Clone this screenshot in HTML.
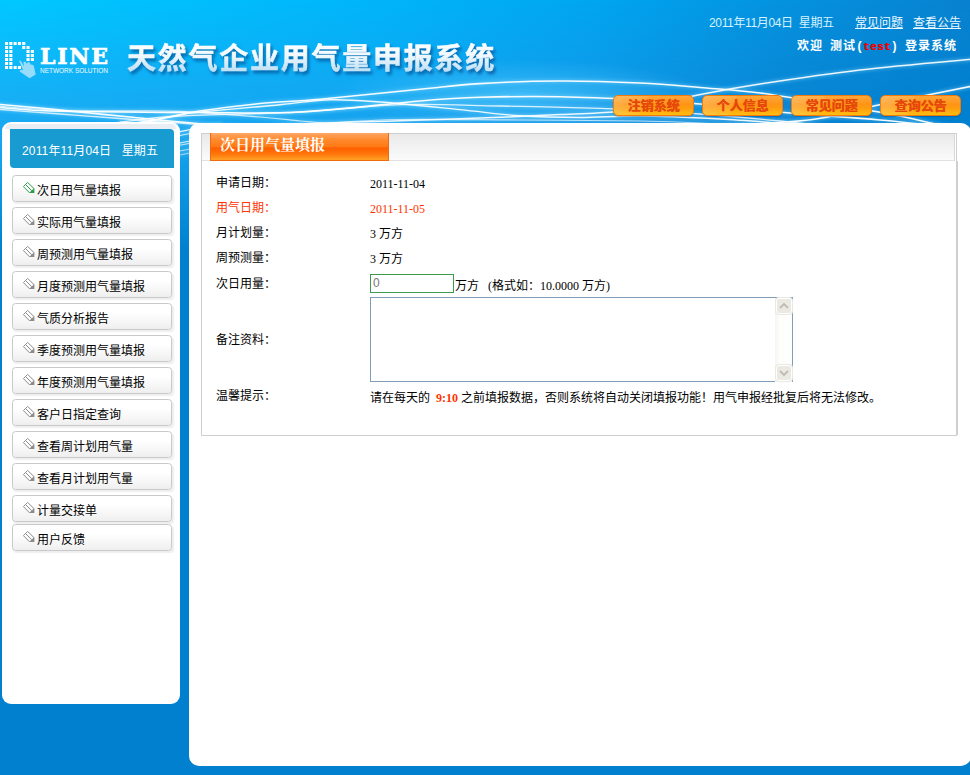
<!DOCTYPE html>
<html lang="zh-CN">
<head>
<meta charset="utf-8">
<title>天然气企业用气量申报系统</title>
<style>
*{box-sizing:border-box;margin:0;padding:0}
html,body{width:970px;height:775px;overflow:hidden}
body{background:#0080cf;font-family:"Liberation Sans","Noto Sans CJK SC",sans-serif;font-size:12px;color:#000;position:relative}
.abs{position:absolute}
#hdr{left:0;top:0;width:970px;height:260px;overflow:hidden}
#hdr svg{display:block}
#title{left:127px;top:35px;font-size:28px;font-weight:bold;letter-spacing:2.4px;white-space:nowrap;line-height:40px;
 color:#e8f5fd;text-shadow:1px 2px 3px rgba(0,70,140,.55)}
#title span{background:linear-gradient(#ffffff 20%,#c6e4f7 85%);-webkit-background-clip:text;background-clip:text;color:transparent}
#tdate{left:709px;top:16px;color:#d6f1ff;white-space:nowrap;line-height:14px;letter-spacing:-.35px}
#tlinks{left:855px;top:16px;white-space:nowrap;line-height:14px;color:#eaf7ff}
#tlinks u{margin-right:10px}
#welcome{left:797px;top:39px;white-space:nowrap;line-height:14px;color:#fff;font-weight:bold;letter-spacing:1px;word-spacing:2.7px}
#welcome i{font-style:normal;display:inline-block;width:7px;text-align:center;letter-spacing:0}
#welcome b{color:#f00000;text-shadow:.4px 0 0 #f00000;font-family:"Liberation Mono",monospace;font-size:11px;letter-spacing:.4px}
.nb{top:95px;width:81px;height:21px;border-radius:5px;border:1px solid #f27a0a;
 background:linear-gradient(115deg,rgba(255,225,170,.35) 0%,rgba(255,225,170,.12) 38%,rgba(255,255,255,0) 40%),linear-gradient(#ffa63a 0%,#ff9416 45%,#ff9a10 60%,#ffbe10 100%);text-shadow:.5px 0 0 #e5480a;
 color:#e5480a;font-weight:bold;font-size:13px;line-height:19px;text-align:center;white-space:nowrap;
 box-shadow:0 1px 1px rgba(0,60,120,.35)}
#lp{left:2px;top:122px;width:178px;height:581.5px;background:#fff;border-radius:9px}
#lpb{left:5px;top:124px;width:171px;height:5px;background:#e9eef5;border-radius:6px 5px 0 0}
#dbox{left:10px;top:129px;width:164px;height:39px;background:#179bd1;border-radius:0 4px 0 4px;color:#fff;font-size:12px;line-height:44px;white-space:nowrap;padding-left:12px;letter-spacing:.15px}
.mi{left:12px;width:160px;height:27px;border:1px solid #c9c9c9;border-radius:3.5px;background:linear-gradient(#ffffff 35%,#efefef 100%);
 box-shadow:1.5px 2px 1.5px rgba(0,0,0,.07);line-height:25px;padding:3px 0 0 24px;white-space:nowrap;font-size:12px}
.mi svg{position:absolute;left:10px;top:6px}
#rp{left:189px;top:123px;width:782px;height:642.5px;background:#fff;border-radius:10px}
#fp{left:201px;top:133px;width:756px;height:303px;border:1px solid #cfcfcf;background:#fff}
#tb{left:202px;top:134px;width:753px;height:27px;background:linear-gradient(#e9e9e9,#fbfbfb);border-bottom:1px solid #e2e2e2;border-right:1px solid #d8d8d8}
#tab{left:210px;top:133px;width:179px;height:28px;background:linear-gradient(#ffa766 0%,#ff8a2e 25%,#ff7a14 50%,#ff5f00 56%,#ff760a 78%,#ffa226 100%);border:1px solid #f06a10;border-top:none;
 color:#fff;font-family:"Liberation Serif","Noto Serif CJK SC",serif;font-weight:bold;font-size:15px;line-height:24px;padding-left:9px;white-space:nowrap}
.lb{left:216px;line-height:14px;white-space:nowrap}
.vl{left:370px;line-height:14px;white-space:nowrap;font-family:"Liberation Serif","Noto Sans CJK SC",serif}
.red{color:#ff3300}
#inp{left:370px;top:274px;width:84px;height:19px;border:1px solid #3c9a50;background:#fff;color:#777;line-height:17px;padding-left:2px;font-family:"Liberation Sans",sans-serif}
#ta{left:370px;top:297px;width:423px;height:85px;border:1px solid #7f9db9;background:#fff}
#sb{left:775px;top:298px;width:17px;height:84px;background:linear-gradient(90deg,#f6f5f0,#fefefd 30%,#fdfdfb)}
.sbtn{left:776px;width:16px;height:16px;border:1px solid #fff;border-radius:3px;background:#ebeae2;box-shadow:0 0 0 1px #e9e8e2}
.sbtn svg{position:absolute;left:2px;top:3px}
</style>
</head>
<body>
<div id="hdr" class="abs">
<svg width="970" height="260" viewBox="0 0 970 260">
<defs>
<linearGradient id="gt" x1="0" y1="0" x2="1" y2="0"><stop offset="0" stop-color="#00c8ff"/><stop offset=".41" stop-color="#00b4fa"/><stop offset=".62" stop-color="#00a5f0"/><stop offset=".82" stop-color="#0591de"/><stop offset="1" stop-color="#0882d0"/></linearGradient>
<linearGradient id="gb" x1="0" y1="0" x2="1" y2="0"><stop offset="0" stop-color="#1aaaf3"/><stop offset=".4" stop-color="#16a2ee"/><stop offset=".6" stop-color="#1596e6"/><stop offset=".8" stop-color="#0a84d2"/><stop offset="1" stop-color="#0080cf"/></linearGradient>
<linearGradient id="m1g" x1="0" y1="0" x2="0" y2="260" gradientUnits="userSpaceOnUse"><stop offset="0" stop-color="#000"/><stop offset=".46" stop-color="#fff"/><stop offset="1" stop-color="#fff"/></linearGradient>
<linearGradient id="m2g" x1="0" y1="0" x2="0" y2="260" gradientUnits="userSpaceOnUse"><stop offset="0" stop-color="#000"/><stop offset=".46" stop-color="#000"/><stop offset=".62" stop-color="#333"/><stop offset=".97" stop-color="#fff"/></linearGradient>
<mask id="m1" maskUnits="userSpaceOnUse" x="0" y="0" width="970" height="260"><rect width="970" height="260" fill="url(#m1g)"/></mask>
<mask id="m2" maskUnits="userSpaceOnUse" x="0" y="0" width="970" height="260"><rect width="970" height="260" fill="url(#m2g)"/></mask>
<radialGradient id="glow" cx="0" cy="0" r="1" gradientUnits="userSpaceOnUse" gradientTransform="translate(520 94) scale(190 34)"><stop offset="0" stop-color="#4cc4fb" stop-opacity=".7"/><stop offset="1" stop-color="#4cc4fb" stop-opacity="0"/></radialGradient>
<filter id="bl" x="-5%" y="-50%" width="110%" height="200%"><feGaussianBlur stdDeviation=".45"/></filter>
<filter id="bl2" x="-5%" y="-50%" width="110%" height="200%"><feGaussianBlur stdDeviation="1.4"/></filter>
</defs>
<rect width="970" height="260" fill="url(#gt)"/>
<rect width="970" height="260" fill="url(#gb)" mask="url(#m1)"/>
<rect width="970" height="260" fill="#0080cf" mask="url(#m2)"/>
<rect width="970" height="260" fill="url(#glow)"/>
<g id="waves" fill="none" stroke-linecap="round">
<g stroke="#9fe4ff" filter="url(#bl2)">
<path d="M-5.0 104.0C2.5 104.7 25.2 106.6 40.0 108.0C54.8 109.4 69.0 111.0 84.0 112.5C99.0 114.0 115.7 115.6 130.0 117.0C144.3 118.4 153.3 119.5 170.0 121.0C186.7 122.5 208.3 124.5 230.0 126.0C251.7 127.5 288.3 129.3 300.0 130.0" stroke-width="4.7" stroke-opacity="0.27"/>
<path d="M-5.0 109.0C5.8 109.8 39.2 112.4 60.0 114.0C80.8 115.6 103.3 117.2 120.0 118.5C136.7 119.8 143.3 120.2 160.0 121.5C176.7 122.8 210.0 125.2 220.0 126.0" stroke-width="4.4" stroke-opacity="0.21"/>
<path d="M-5.0 107.0C2.5 107.6 22.5 109.7 40.0 110.5C57.5 111.3 73.3 111.5 100.0 111.8C126.7 112.1 166.7 112.5 200.0 112.5C233.3 112.5 263.3 113.9 300.0 112.0C336.7 110.1 390.0 103.5 420.0 101.0C450.0 98.5 456.7 98.0 480.0 97.3C503.3 96.6 533.3 96.3 560.0 96.7C586.7 97.1 616.7 98.5 640.0 99.7C663.3 100.9 675.0 101.8 700.0 104.0C725.0 106.2 760.0 110.3 790.0 113.0C820.0 115.7 849.2 117.2 880.0 120.0C910.8 122.8 959.2 128.3 975.0 130.0" stroke-width="4.7" stroke-opacity="0.27"/>
<path d="M110.0 128.0C113.3 127.3 120.8 125.7 130.0 124.0C139.2 122.3 153.3 120.2 165.0 118.0C176.7 115.8 184.2 113.4 200.0 111.0C215.8 108.6 240.0 105.5 260.0 103.5C280.0 101.5 293.3 101.7 320.0 99.3C346.7 96.9 393.3 91.8 420.0 89.2C446.7 86.6 456.7 85.0 480.0 83.6C503.3 82.2 533.3 81.1 560.0 81.0C586.7 80.9 616.7 81.9 640.0 83.0C663.3 84.1 680.0 85.8 700.0 87.5C720.0 89.2 738.3 90.2 760.0 93.0C781.7 95.8 806.7 100.2 830.0 104.0C853.3 107.8 875.8 111.0 900.0 116.0C924.2 121.0 962.5 131.0 975.0 134.0" stroke-width="4.7" stroke-opacity="0.27"/>
<path d="M120.0 130.0C123.3 129.2 130.0 127.6 140.0 125.0C150.0 122.4 156.7 118.0 180.0 114.6C203.3 111.2 255.0 107.2 280.0 104.7C305.0 102.2 313.3 100.2 330.0 99.8C346.7 99.3 358.3 100.4 380.0 102.0C401.7 103.6 436.7 107.3 460.0 109.6C483.3 111.9 500.0 114.5 520.0 115.8C540.0 117.1 560.0 117.5 580.0 117.5C600.0 117.5 616.7 115.8 640.0 116.0C663.3 116.2 695.0 117.7 720.0 119.0C745.0 120.3 778.3 123.2 790.0 124.0" stroke-width="4.5" stroke-opacity="0.26"/>
<path d="M260.0 128.0C266.7 127.3 276.7 125.2 300.0 124.0C323.3 122.8 370.0 121.7 400.0 120.7C430.0 119.7 453.3 119.0 480.0 118.0C506.7 117.0 536.7 115.6 560.0 114.5C583.3 113.4 603.3 113.2 620.0 111.5C636.7 109.8 646.2 106.9 660.0 104.0C673.8 101.1 686.3 97.3 703.0 94.0C719.7 90.7 733.8 88.0 760.0 84.0C786.2 80.0 824.2 74.2 860.0 70.0C895.8 65.8 955.8 60.8 975.0 59.0" stroke-width="4.6" stroke-opacity="0.26"/>
<path d="M120.0 122.0C130.0 121.0 150.0 117.7 180.0 116.0C210.0 114.3 263.3 113.9 300.0 112.0C336.7 110.1 366.7 105.7 400.0 104.7C433.3 103.7 466.7 105.4 500.0 106.0C533.3 106.6 576.7 107.6 600.0 108.4C623.3 109.2 623.3 109.9 640.0 110.8C656.7 111.7 676.7 112.3 700.0 114.0C723.3 115.7 758.3 118.8 780.0 121.0C801.7 123.2 821.7 126.0 830.0 127.0" stroke-width="4.4" stroke-opacity="0.22"/>
<path d="M660.0 130.0C666.7 129.5 680.2 128.2 700.0 127.0C719.8 125.8 758.7 124.0 779.0 122.5C799.3 121.0 805.8 120.8 822.0 118.0C838.2 115.2 850.5 110.9 876.0 105.5C901.5 100.1 958.5 88.8 975.0 85.5" stroke-width="4.7" stroke-opacity="0.27"/>
<path d="M300.0 126.0C305.0 125.5 313.3 124.1 330.0 123.0C346.7 121.9 368.3 120.0 400.0 119.5C431.7 119.0 480.0 119.8 520.0 120.0C560.0 120.2 610.0 120.5 640.0 121.0C670.0 121.5 680.0 122.0 700.0 123.0C720.0 124.0 750.0 126.3 760.0 127.0" stroke-width="4.3" stroke-opacity="0.18"/>
<path d="M-5.0 106.0C5.8 106.7 39.2 109.5 60.0 110.3C80.8 111.1 100.0 110.6 120.0 110.8C140.0 111.0 156.7 110.3 180.0 111.3C203.3 112.3 240.0 115.4 260.0 117.0C280.0 118.6 288.3 119.9 300.0 121.0C311.7 122.1 316.7 122.3 330.0 123.5C343.3 124.7 371.7 127.2 380.0 128.0" stroke-width="4.3" stroke-opacity="0.20"/>
<path d="M150.0 137.6C155.8 136.4 173.3 132.9 185.0 130.6C196.7 128.3 214.2 124.8 220.0 123.6" stroke-width="4.2" stroke-opacity="0.24"/>
<path d="M150.0 141.5C155.8 140.3 173.3 136.8 185.0 134.5C196.7 132.2 214.2 128.7 220.0 127.5" stroke-width="4.2" stroke-opacity="0.21"/>
<path d="M150.0 149.0C155.8 147.8 173.3 144.3 185.0 142.0C196.7 139.7 214.2 136.2 220.0 135.0" stroke-width="4.2" stroke-opacity="0.21"/>
<path d="M150.0 151.2C155.8 150.0 173.3 146.5 185.0 144.2C196.7 141.9 214.2 138.4 220.0 137.2" stroke-width="4.2" stroke-opacity="0.18"/>
<path d="M150.0 157.0C155.8 155.8 173.3 152.3 185.0 150.0C196.7 147.7 214.2 144.2 220.0 143.0" stroke-width="4.2" stroke-opacity="0.17"/>
<path d="M150.0 161.0C155.8 159.8 173.3 156.3 185.0 154.0C196.7 151.7 214.2 148.2 220.0 147.0" stroke-width="4.2" stroke-opacity="0.15"/>
</g>
<g stroke="#fff" filter="url(#bl)">
<path d="M-5.0 104.0C2.5 104.7 25.2 106.6 40.0 108.0C54.8 109.4 69.0 111.0 84.0 112.5C99.0 114.0 115.7 115.6 130.0 117.0C144.3 118.4 153.3 119.5 170.0 121.0C186.7 122.5 208.3 124.5 230.0 126.0C251.7 127.5 288.3 129.3 300.0 130.0" stroke-width="1.6" stroke-opacity="0.95"/>
<path d="M-5.0 109.0C5.8 109.8 39.2 112.4 60.0 114.0C80.8 115.6 103.3 117.2 120.0 118.5C136.7 119.8 143.3 120.2 160.0 121.5C176.7 122.8 210.0 125.2 220.0 126.0" stroke-width="1.3" stroke-opacity="0.75"/>
<path d="M-5.0 107.0C2.5 107.6 22.5 109.7 40.0 110.5C57.5 111.3 73.3 111.5 100.0 111.8C126.7 112.1 166.7 112.5 200.0 112.5C233.3 112.5 263.3 113.9 300.0 112.0C336.7 110.1 390.0 103.5 420.0 101.0C450.0 98.5 456.7 98.0 480.0 97.3C503.3 96.6 533.3 96.3 560.0 96.7C586.7 97.1 616.7 98.5 640.0 99.7C663.3 100.9 675.0 101.8 700.0 104.0C725.0 106.2 760.0 110.3 790.0 113.0C820.0 115.7 849.2 117.2 880.0 120.0C910.8 122.8 959.2 128.3 975.0 130.0" stroke-width="1.6" stroke-opacity="0.95"/>
<path d="M110.0 128.0C113.3 127.3 120.8 125.7 130.0 124.0C139.2 122.3 153.3 120.2 165.0 118.0C176.7 115.8 184.2 113.4 200.0 111.0C215.8 108.6 240.0 105.5 260.0 103.5C280.0 101.5 293.3 101.7 320.0 99.3C346.7 96.9 393.3 91.8 420.0 89.2C446.7 86.6 456.7 85.0 480.0 83.6C503.3 82.2 533.3 81.1 560.0 81.0C586.7 80.9 616.7 81.9 640.0 83.0C663.3 84.1 680.0 85.8 700.0 87.5C720.0 89.2 738.3 90.2 760.0 93.0C781.7 95.8 806.7 100.2 830.0 104.0C853.3 107.8 875.8 111.0 900.0 116.0C924.2 121.0 962.5 131.0 975.0 134.0" stroke-width="1.6" stroke-opacity="0.95"/>
<path d="M120.0 130.0C123.3 129.2 130.0 127.6 140.0 125.0C150.0 122.4 156.7 118.0 180.0 114.6C203.3 111.2 255.0 107.2 280.0 104.7C305.0 102.2 313.3 100.2 330.0 99.8C346.7 99.3 358.3 100.4 380.0 102.0C401.7 103.6 436.7 107.3 460.0 109.6C483.3 111.9 500.0 114.5 520.0 115.8C540.0 117.1 560.0 117.5 580.0 117.5C600.0 117.5 616.7 115.8 640.0 116.0C663.3 116.2 695.0 117.7 720.0 119.0C745.0 120.3 778.3 123.2 790.0 124.0" stroke-width="1.4" stroke-opacity="0.90"/>
<path d="M260.0 128.0C266.7 127.3 276.7 125.2 300.0 124.0C323.3 122.8 370.0 121.7 400.0 120.7C430.0 119.7 453.3 119.0 480.0 118.0C506.7 117.0 536.7 115.6 560.0 114.5C583.3 113.4 603.3 113.2 620.0 111.5C636.7 109.8 646.2 106.9 660.0 104.0C673.8 101.1 686.3 97.3 703.0 94.0C719.7 90.7 733.8 88.0 760.0 84.0C786.2 80.0 824.2 74.2 860.0 70.0C895.8 65.8 955.8 60.8 975.0 59.0" stroke-width="1.5" stroke-opacity="0.90"/>
<path d="M120.0 122.0C130.0 121.0 150.0 117.7 180.0 116.0C210.0 114.3 263.3 113.9 300.0 112.0C336.7 110.1 366.7 105.7 400.0 104.7C433.3 103.7 466.7 105.4 500.0 106.0C533.3 106.6 576.7 107.6 600.0 108.4C623.3 109.2 623.3 109.9 640.0 110.8C656.7 111.7 676.7 112.3 700.0 114.0C723.3 115.7 758.3 118.8 780.0 121.0C801.7 123.2 821.7 126.0 830.0 127.0" stroke-width="1.3" stroke-opacity="0.80"/>
<path d="M660.0 130.0C666.7 129.5 680.2 128.2 700.0 127.0C719.8 125.8 758.7 124.0 779.0 122.5C799.3 121.0 805.8 120.8 822.0 118.0C838.2 115.2 850.5 110.9 876.0 105.5C901.5 100.1 958.5 88.8 975.0 85.5" stroke-width="1.6" stroke-opacity="0.95"/>
<path d="M300.0 126.0C305.0 125.5 313.3 124.1 330.0 123.0C346.7 121.9 368.3 120.0 400.0 119.5C431.7 119.0 480.0 119.8 520.0 120.0C560.0 120.2 610.0 120.5 640.0 121.0C670.0 121.5 680.0 122.0 700.0 123.0C720.0 124.0 750.0 126.3 760.0 127.0" stroke-width="1.2" stroke-opacity="0.65"/>
<path d="M-5.0 106.0C5.8 106.7 39.2 109.5 60.0 110.3C80.8 111.1 100.0 110.6 120.0 110.8C140.0 111.0 156.7 110.3 180.0 111.3C203.3 112.3 240.0 115.4 260.0 117.0C280.0 118.6 288.3 119.9 300.0 121.0C311.7 122.1 316.7 122.3 330.0 123.5C343.3 124.7 371.7 127.2 380.0 128.0" stroke-width="1.2" stroke-opacity="0.70"/>
<path d="M150.0 137.6C155.8 136.4 173.3 132.9 185.0 130.6C196.7 128.3 214.2 124.8 220.0 123.6" stroke-width="1.1" stroke-opacity="0.85"/>
<path d="M150.0 141.5C155.8 140.3 173.3 136.8 185.0 134.5C196.7 132.2 214.2 128.7 220.0 127.5" stroke-width="1.1" stroke-opacity="0.75"/>
<path d="M150.0 149.0C155.8 147.8 173.3 144.3 185.0 142.0C196.7 139.7 214.2 136.2 220.0 135.0" stroke-width="1.1" stroke-opacity="0.75"/>
<path d="M150.0 151.2C155.8 150.0 173.3 146.5 185.0 144.2C196.7 141.9 214.2 138.4 220.0 137.2" stroke-width="1.1" stroke-opacity="0.65"/>
<path d="M150.0 157.0C155.8 155.8 173.3 152.3 185.0 150.0C196.7 147.7 214.2 144.2 220.0 143.0" stroke-width="1.1" stroke-opacity="0.60"/>
<path d="M150.0 161.0C155.8 159.8 173.3 156.3 185.0 154.0C196.7 151.7 214.2 148.2 220.0 147.0" stroke-width="1.1" stroke-opacity="0.55"/>
</g>
</g><!--/waves-->
</svg>
</div>
<svg id="logo" class="abs" style="left:0;top:30px" width="125" height="60" viewBox="0 30 125 60"><g fill="#fff"><rect x="5.0" y="42.0" width="3.1" height="3" /><rect x="9.3" y="42.0" width="3.1" height="3" /><rect x="13.6" y="42.0" width="3.1" height="3" /><rect x="17.9" y="42.0" width="3.1" height="3" /><rect x="22.2" y="42.0" width="3.1" height="3" /><rect x="5.0" y="46.0" width="3.1" height="3" /><rect x="9.3" y="46.0" width="3.1" height="3" /><rect x="22.2" y="46.0" width="3.1" height="3" /><rect x="26.5" y="46.0" width="3.1" height="3" /><rect x="5.0" y="50.0" width="3.1" height="3" /><rect x="9.3" y="50.0" width="3.1" height="3" /><rect x="26.5" y="50.0" width="3.1" height="3" /><rect x="30.8" y="50.0" width="3.1" height="3" /><rect x="5.0" y="54.0" width="3.1" height="3" /><rect x="9.3" y="54.0" width="3.1" height="3" /><rect x="26.5" y="54.0" width="3.1" height="3" /><rect x="30.8" y="54.0" width="3.1" height="3" /><rect x="5.0" y="58.0" width="3.1" height="3" /><rect x="9.3" y="58.0" width="3.1" height="3" /><rect x="26.5" y="58.0" width="3.1" height="3" /><rect x="30.8" y="58.0" width="3.1" height="3" /><rect x="5.0" y="62.0" width="3.1" height="3" /><rect x="9.3" y="62.0" width="3.1" height="3" /><rect x="5.0" y="66.0" width="3.1" height="3" /><rect x="9.3" y="66.0" width="3.1" height="3" /><rect x="13.6" y="66.0" width="3.1" height="3" /><rect x="17.9" y="66.0" width="3.1" height="3" /></g><path d="M19 60.6L21 61L24 66.5L23.4 62.3L25.4 61.6L27 64L27.6 62.3L29.8 62.6L30.8 65.2L31.6 64.2L33.8 65.8L35.7 74.4L29.6 78.3L19.4 71.2L21 69.6L23.2 70.6Z" fill="#b6e5fb" fill-opacity=".82" style="filter:blur(.3px)"/><text x="40" y="63.6" font-family="'DejaVu Serif','Liberation Serif',serif" font-weight="bold" font-size="22" fill="#fff" stroke="#fff" stroke-width=".6" textLength="68" lengthAdjust="spacing">LINE</text><text x="40" y="73" font-family="'Liberation Sans',sans-serif" font-size="7" fill="#f4fbff" textLength="68" lengthAdjust="spacingAndGlyphs">NETWORK SOLUTION</text></svg>
<svg class="abs" style="left:120px;top:30px" width="390" height="60" viewBox="120 30 390 60"><defs><linearGradient id="tg" x1="0" y1="42" x2="0" y2="71" gradientUnits="userSpaceOnUse"><stop offset="0" stop-color="#fff"/><stop offset=".45" stop-color="#f2f9fe"/><stop offset="1" stop-color="#bfe0f5"/></linearGradient></defs><text id="tt1" x="127" y="68.6" font-family="'Liberation Sans','Noto Sans CJK SC',sans-serif" font-weight="bold" font-size="29" letter-spacing="1.75" fill="url(#tg)" stroke="url(#tg)" stroke-width=".5" style="filter:drop-shadow(2px 3px 1.8px rgba(0,62,130,.6))">天然气企业用气量申报系统</text></svg>
<div id="tdate" class="abs">2011年11月04日&nbsp; 星期五</div>
<div id="tlinks" class="abs"><u>常见问题</u><u>查看公告</u></div>
<div id="welcome" class="abs">欢迎 测试<i>(</i><b>test</b><i>)</i> 登录系统</div>
<div class="abs nb" style="left:613px">注销系统</div>
<div class="abs nb" style="left:702px">个人信息</div>
<div class="abs nb" style="left:791px">常见问题</div>
<div class="abs nb" style="left:880px">查询公告</div>

<div id="lp" class="abs"></div>
<div id="lpb" class="abs"></div>
<div id="dbox" class="abs">2011年11月04日&nbsp;&nbsp; 星期五</div>
<div id="menu">
<div class="abs mi" style="top:175px"><svg width="13" height="12" viewBox="0 0 13 12"><g fill="none" stroke="#2e9d4e" stroke-width="1"><path d="M0.4 4.6L4.6 0.4L11.1 6.7M2.5 2.5L8.7 8.7M0.4 4.6L6.5 10.8"/></g><path d="M11.4 6.1V11H6Z" fill="#2e9d4e"/></svg>次日用气量填报</div>
<div class="abs mi" style="top:207px"><svg width="13" height="12" viewBox="0 0 13 12"><g fill="none" stroke="#8c8c8c" stroke-width="1"><path d="M0.4 4.6L4.6 0.4L11.1 6.7M2.5 2.5L8.7 8.7M0.4 4.6L6.5 10.8"/></g><path d="M11.4 6.1V11H6Z" fill="#8c8c8c"/></svg>实际用气量填报</div>
<div class="abs mi" style="top:239px"><svg width="13" height="12" viewBox="0 0 13 12"><g fill="none" stroke="#8c8c8c" stroke-width="1"><path d="M0.4 4.6L4.6 0.4L11.1 6.7M2.5 2.5L8.7 8.7M0.4 4.6L6.5 10.8"/></g><path d="M11.4 6.1V11H6Z" fill="#8c8c8c"/></svg>周预测用气量填报</div>
<div class="abs mi" style="top:271px"><svg width="13" height="12" viewBox="0 0 13 12"><g fill="none" stroke="#8c8c8c" stroke-width="1"><path d="M0.4 4.6L4.6 0.4L11.1 6.7M2.5 2.5L8.7 8.7M0.4 4.6L6.5 10.8"/></g><path d="M11.4 6.1V11H6Z" fill="#8c8c8c"/></svg>月度预测用气量填报</div>
<div class="abs mi" style="top:303px"><svg width="13" height="12" viewBox="0 0 13 12"><g fill="none" stroke="#8c8c8c" stroke-width="1"><path d="M0.4 4.6L4.6 0.4L11.1 6.7M2.5 2.5L8.7 8.7M0.4 4.6L6.5 10.8"/></g><path d="M11.4 6.1V11H6Z" fill="#8c8c8c"/></svg>气质分析报告</div>
<div class="abs mi" style="top:335px"><svg width="13" height="12" viewBox="0 0 13 12"><g fill="none" stroke="#8c8c8c" stroke-width="1"><path d="M0.4 4.6L4.6 0.4L11.1 6.7M2.5 2.5L8.7 8.7M0.4 4.6L6.5 10.8"/></g><path d="M11.4 6.1V11H6Z" fill="#8c8c8c"/></svg>季度预测用气量填报</div>
<div class="abs mi" style="top:367px"><svg width="13" height="12" viewBox="0 0 13 12"><g fill="none" stroke="#8c8c8c" stroke-width="1"><path d="M0.4 4.6L4.6 0.4L11.1 6.7M2.5 2.5L8.7 8.7M0.4 4.6L6.5 10.8"/></g><path d="M11.4 6.1V11H6Z" fill="#8c8c8c"/></svg>年度预测用气量填报</div>
<div class="abs mi" style="top:399px"><svg width="13" height="12" viewBox="0 0 13 12"><g fill="none" stroke="#8c8c8c" stroke-width="1"><path d="M0.4 4.6L4.6 0.4L11.1 6.7M2.5 2.5L8.7 8.7M0.4 4.6L6.5 10.8"/></g><path d="M11.4 6.1V11H6Z" fill="#8c8c8c"/></svg>客户日指定查询</div>
<div class="abs mi" style="top:431px"><svg width="13" height="12" viewBox="0 0 13 12"><g fill="none" stroke="#8c8c8c" stroke-width="1"><path d="M0.4 4.6L4.6 0.4L11.1 6.7M2.5 2.5L8.7 8.7M0.4 4.6L6.5 10.8"/></g><path d="M11.4 6.1V11H6Z" fill="#8c8c8c"/></svg>查看周计划用气量</div>
<div class="abs mi" style="top:463px"><svg width="13" height="12" viewBox="0 0 13 12"><g fill="none" stroke="#8c8c8c" stroke-width="1"><path d="M0.4 4.6L4.6 0.4L11.1 6.7M2.5 2.5L8.7 8.7M0.4 4.6L6.5 10.8"/></g><path d="M11.4 6.1V11H6Z" fill="#8c8c8c"/></svg>查看月计划用气量</div>
<div class="abs mi" style="top:495px"><svg width="13" height="12" viewBox="0 0 13 12"><g fill="none" stroke="#8c8c8c" stroke-width="1"><path d="M0.4 4.6L4.6 0.4L11.1 6.7M2.5 2.5L8.7 8.7M0.4 4.6L6.5 10.8"/></g><path d="M11.4 6.1V11H6Z" fill="#8c8c8c"/></svg>计量交接单</div>
<div class="abs mi" style="top:524px"><svg width="13" height="12" viewBox="0 0 13 12"><g fill="none" stroke="#8c8c8c" stroke-width="1"><path d="M0.4 4.6L4.6 0.4L11.1 6.7M2.5 2.5L8.7 8.7M0.4 4.6L6.5 10.8"/></g><path d="M11.4 6.1V11H6Z" fill="#8c8c8c"/></svg>用户反馈</div>
</div>

<div id="rp" class="abs"></div>
<div id="fp" class="abs"></div>
<div id="tb" class="abs"></div>
<div class="abs" style="left:957px;top:161px;width:1px;height:274px;background:#cfcfcf"></div>
<div id="tab" class="abs">次日用气量填报</div>
<div class="abs lb" style="top:176px">申请日期：</div>
<div class="abs lb red" style="top:201px">用气日期：</div>
<div class="abs lb" style="top:226px">月计划量：</div>
<div class="abs lb" style="top:251px">周预测量：</div>
<div class="abs lb" style="top:277px">次日用量：</div>
<div class="abs lb" style="top:333px">备注资料：</div>
<div class="abs lb" style="top:389px">温馨提示：</div>
<div class="abs vl" style="top:177px">2011-11-04</div>
<div class="abs vl red" style="top:202px">2011-11-05</div>
<div class="abs vl" style="top:227px">3 万方</div>
<div class="abs vl" style="top:252px">3 万方</div>
<div id="inp" class="abs">0</div>
<div class="abs vl" style="left:455px;top:279px">万方&nbsp;&nbsp; (格式如：10.0000 万方)</div>
<div id="ta" class="abs"></div>
<div id="sb" class="abs"></div>
<div class="abs sbtn" style="top:298px"><svg width="10" height="8" viewBox="0 0 10 8"><path d="M1 6L5 2L9 6" fill="none" stroke="#bdbcb4" stroke-width="1.8"/></svg></div>
<div class="abs sbtn" style="top:365px"><svg width="10" height="8" viewBox="0 0 10 8"><path d="M1 2L5 6L9 2" fill="none" stroke="#bdbcb4" stroke-width="1.8"/></svg></div>
<div class="abs vl" style="top:391px">请在每天的&nbsp; <b class="red">9:10</b> 之前填报数据，否则系统将自动关闭填报功能！用气申报经批复后将无法修改。</div>
</body>
</html>
